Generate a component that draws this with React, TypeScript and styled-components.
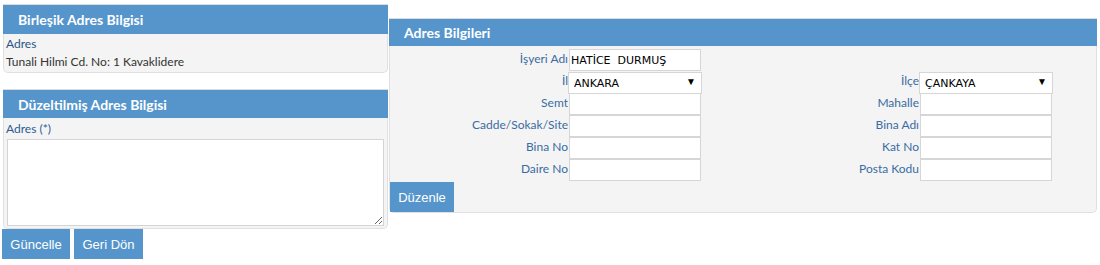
import React from 'react';
import styled, { createGlobalStyle } from 'styled-components';

const GlobalStyle = createGlobalStyle`
    body {
        margin: 0;
        background: #fff;
        font-family: "Lato", "Open Sans", sans-serif;
    }
`;

const Page = styled.div`
    display: flex;
    align-items: flex-start;
    padding-left: 3px;
`;

const LeftColumn = styled.div`
    width: 385px;
    padding-top: 5px;
    display: flex;
    flex-direction: column;
`;

const Panel = styled.div<{ $top?: number }>`
    background: #f4f4f4;
    border: 1px solid #e0e0e0;
    border-top: none;
    border-radius: 0 0 5px 5px;
    margin-top: ${({ $top }) => $top ?? 0}px;
`;

const PanelHeader = styled.div<{ $height?: number }>`
    height: ${({ $height }) => $height ?? 28}px;
    background: #5595cb;
    color: #fff;
    font-size: 14px;
    font-weight: 700;
    display: flex;
    align-items: center;
    padding-left: 15px;
    margin: 0 -1px;
    box-shadow: 0 -1px 0 #dcdcdc;
`;

const InfoBody = styled.div`
    padding: 1px 2px 1px;
    font-size: 12px;
    line-height: 18px;
`;

const InfoLabel = styled.div`
    color: #2a5586;
`;

const InfoValue = styled.div`
    color: #333;
`;

const EditBody = styled.div`
    padding: 2px 3px 2px;
    font-size: 12px;
    line-height: 18px;
    display: flex;
    flex-direction: column;
`;

const AreaLabel = styled.label`
    color: #2a5d94;
    margin-left: -1px;
`;

const AddressArea = styled.textarea`
    height: 87px;
    box-sizing: border-box;
    border: 1px solid #d4d4d4;
    background: #fff;
    resize: both;
    margin: 1px 0 0;
    font-family: "DejaVu Sans", sans-serif;
    font-size: 11px;
`;

const ButtonRow = styled.div`
    display: flex;
    gap: 4px;
    margin-left: -1px;
`;

const ActionButton = styled.button<{ $width: number }>`
    width: ${({ $width }) => $width}px;
    height: 30px;
    border: none;
    background: #5595cb;
    color: #fff;
    font-family: "Liberation Sans", Arial, sans-serif;
    font-size: 13px;
    padding: 0;
    cursor: pointer;
`;

const RightPanel = styled(Panel)`
    width: 706px;
    margin-left: 1px;
    margin-top: 19px;
`;

const FormGrid = styled.div`
    display: grid;
    grid-template-columns: 179px 134px 217px 134px;
    grid-auto-rows: 22px;
    padding-top: 3px;
`;

const FieldLabel = styled.label`
    color: #3a6ca3;
    font-size: 12px;
    text-align: right;
    line-height: 20px;
    padding-right: 1px;
    white-space: nowrap;
`;

const TextInput = styled.input`
    width: 132px;
    height: 22px;
    box-sizing: border-box;
    border: 1px solid #d6d6d6;
    background: #fff;
    padding: 0 1px;
    font-family: "DejaVu Sans", sans-serif;
    font-size: 11px;
    color: #000;
    outline: none;
`;

const SelectWrap = styled.div`
    position: relative;
    width: 134px;
    height: 22px;
    margin-left: -1px;
`;

const Select = styled.select`
    appearance: none;
    width: 100%;
    height: 100%;
    box-sizing: border-box;
    border: 1px solid #d6d6d6;
    background: #fff;
    padding: 2px 0 0 5px;
    font-family: "DejaVu Sans", sans-serif;
    font-size: 11px;
    color: #000;
    outline: none;
`;

const Caret = styled.span`
    position: absolute;
    right: 6px;
    top: 4px;
    font-size: 10px;
    color: #000;
    pointer-events: none;
`;

const Empty = styled.div``;

const PanelFooter = styled.div`
    padding-top: 1px;
`;

type Row = [string, React.ReactNode, string, React.ReactNode];

function Dropdown({ value }: { value: string }) {
    return (
        <SelectWrap>
            <Select defaultValue={value}>
                <option>{value}</option>
            </Select>
            <Caret>▼</Caret>
        </SelectWrap>
    );
}

export default function App() {
    const rows: Row[] = [
        ['İşyeri Adı', <TextInput defaultValue="HATİCE  DURMUŞ" />, '', null],
        ['İl', <Dropdown value="ANKARA" />, 'İlçe', <Dropdown value="ÇANKAYA" />],
        ['Semt', <TextInput />, 'Mahalle', <TextInput />],
        ['Cadde/Sokak/Site', <TextInput />, 'Bina Adı', <TextInput />],
        ['Bina No', <TextInput />, 'Kat No', <TextInput />],
        ['Daire No', <TextInput />, 'Posta Kodu', <TextInput />],
    ];

    return (
        <>
            <GlobalStyle />
            <Page>
                <LeftColumn>
                    <Panel>
                        <PanelHeader $height={29}>Birleşik Adres Bilgisi</PanelHeader>
                        <InfoBody>
                            <InfoLabel>Adres</InfoLabel>
                            <InfoValue>Tunali Hilmi Cd. No: 1 Kavaklidere</InfoValue>
                        </InfoBody>
                    </Panel>
                    <Panel $top={17}>
                        <PanelHeader>Düzeltilmiş Adres Bilgisi</PanelHeader>
                        <EditBody>
                            <AreaLabel>Adres (*)</AreaLabel>
                            <AddressArea />
                        </EditBody>
                    </Panel>
                    <ButtonRow>
                        <ActionButton $width={68}>Güncelle</ActionButton>
                        <ActionButton $width={69}>Geri Dön</ActionButton>
                    </ButtonRow>
                </LeftColumn>
                <RightPanel>
                    <PanelHeader $height={27}>Adres Bilgileri</PanelHeader>
                    <FormGrid>
                        {rows.map(([l1, f1, l2, f2], i) => (
                            <React.Fragment key={i}>
                                <FieldLabel>{l1}</FieldLabel>
                                {f1}
                                {l2 ? <FieldLabel>{l2}</FieldLabel> : <Empty />}
                                {f2 ?? <Empty />}
                            </React.Fragment>
                        ))}
                    </FormGrid>
                    <PanelFooter>
                        <ActionButton $width={64}>Düzenle</ActionButton>
                    </PanelFooter>
                </RightPanel>
            </Page>
        </>
    );
}
